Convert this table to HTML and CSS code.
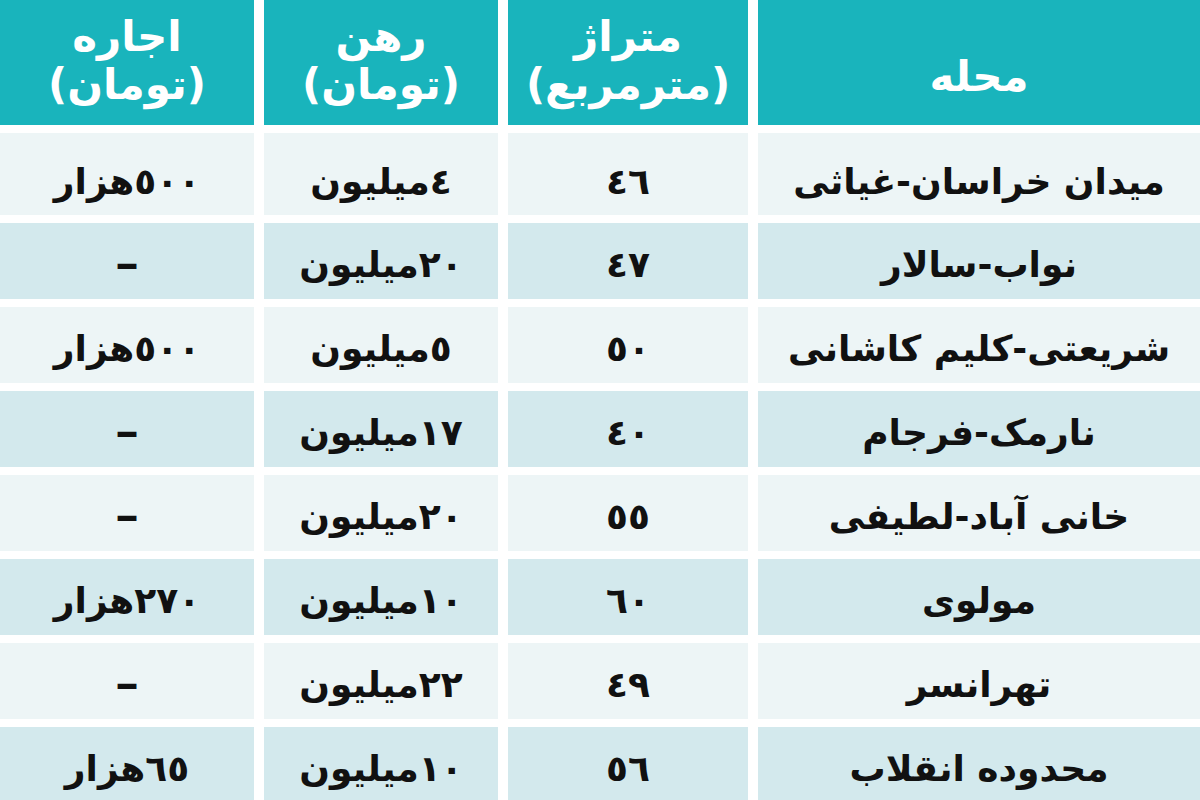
FILE: index.html
```html
<!DOCTYPE html>
<html lang="fa" dir="rtl">
<head>
<meta charset="utf-8">
<title>جدول اجاره</title>
<link rel="stylesheet" href="styles.css">
</head>
<body>
<div class="table">
  <div class="cell head single">محله</div>
  <div class="cell head"><span>متراژ</span><span>(مترمربع)</span></div>
  <div class="cell head"><span>رهن</span><span>(تومان)</span></div>
  <div class="cell head"><span>اجاره</span><span>(تومان)</span></div>

  <div class="cell light first">میدان خراسان-غیاثی</div>
  <div class="cell light first">٤٦</div>
  <div class="cell light first">٤میلیون</div>
  <div class="cell light first">٥٠٠هزار</div>

  <div class="cell blue">نواب-سالار</div>
  <div class="cell blue">٤٧</div>
  <div class="cell blue">٢٠میلیون</div>
  <div class="cell blue"><span class="dash">–</span></div>

  <div class="cell light">شریعتی-کلیم کاشانی</div>
  <div class="cell light">٥٠</div>
  <div class="cell light">٥میلیون</div>
  <div class="cell light">٥٠٠هزار</div>

  <div class="cell blue">نارمک-فرجام</div>
  <div class="cell blue">٤٠</div>
  <div class="cell blue">١٧میلیون</div>
  <div class="cell blue"><span class="dash">–</span></div>

  <div class="cell light">خانی آباد-لطیفی</div>
  <div class="cell light">٥٥</div>
  <div class="cell light">٢٠میلیون</div>
  <div class="cell light"><span class="dash">–</span></div>

  <div class="cell blue">مولوی</div>
  <div class="cell blue">٦٠</div>
  <div class="cell blue">١٠میلیون</div>
  <div class="cell blue">٢٧٠هزار</div>

  <div class="cell light">تهرانسر</div>
  <div class="cell light">٤٩</div>
  <div class="cell light">٢٢میلیون</div>
  <div class="cell light"><span class="dash">–</span></div>

  <div class="cell blue">محدوده انقلاب</div>
  <div class="cell blue">٥٦</div>
  <div class="cell blue">١٠میلیون</div>
  <div class="cell blue">٦٥هزار</div>
</div>
</body>
</html>
```

FILE: styles.css
```css
html, body {
  margin: 0;
  padding: 0;
  background: #ffffff;
  overflow: hidden;
}

body {
  width: 1200px;
  height: 800px;
  font-family: "DejaVu Sans", "Noto Sans", sans-serif;
}

.table {
  display: grid;
  direction: rtl;
  grid-template-columns: 442px 240px 234px 254px;
  grid-template-rows: 125px 82px repeat(7, 76px);
  column-gap: 10px;
  row-gap: 8px;
}

.cell {
  display: flex;
  align-items: center;
  justify-content: center;
  color: #111111;
  font-size: 36px;
  font-weight: bold;
  padding-top: 6px;
  box-sizing: border-box;
  white-space: nowrap;
}

.head {
  background: #19b4bc;
  color: #ffffff;
  flex-direction: column;
  justify-content: flex-end;
  font-size: 42px;
  line-height: 48px;
  padding: 0 0 16px 0;
}

.head.single {
  justify-content: center;
  padding: 28px 0 0 0;
}

.light {
  background: #edf5f6;
}

.blue {
  background: #d3e9ed;
}

.first {
  padding-top: 14px;
}

.dash {
  display: inline-block;
  font-size: 40px;
  transform: scaleX(1.2);
}
```
